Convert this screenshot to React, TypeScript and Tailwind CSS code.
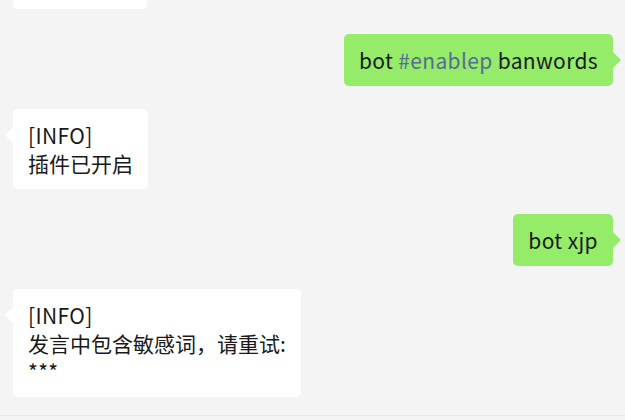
import React from "react";

const font = { fontFamily: '"Noto Sans CJK SC", "Noto Sans", sans-serif' };

function Left({ children, className = "" }: { children: React.ReactNode; className?: string }) {
  return (
    <div className={`flex justify-start pl-[13px] ${className}`}>
      <div className="relative rounded-[5px] bg-white px-[15px] py-[12px] text-[21px] leading-[28px] text-[#191919]">
        <span className="absolute left-[-8px] top-[18px] h-0 w-0 border-y-[8px] border-r-[8px] border-y-transparent border-r-white" />
        {children}
      </div>
    </div>
  );
}

function Right({ children, className = "" }: { children: React.ReactNode; className?: string }) {
  return (
    <div className={`flex justify-end pr-[12px] ${className}`}>
      <div className="relative rounded-[5px] bg-[#95ec69] px-[15px] py-[12px] text-[21px] leading-[28px] tracking-[0.35px] text-[#191919]">
        <span className="absolute right-[-8px] top-[18px] h-0 w-0 border-y-[8px] border-l-[8px] border-y-transparent border-l-[#95ec69]" />
        {children}
      </div>
    </div>
  );
}

export default function App() {
  return (
    <div className="flex h-[420px] w-[625px] flex-col overflow-hidden bg-[#f4f4f4]" style={font}>
      <div className="pl-[13px]">
        <div className="h-[9px] w-[134px] rounded-b-[5px] bg-white" />
      </div>
      <Right className="mt-[25px]">
        bot <span className="text-[#576b95]">#enablep</span> banwords
      </Right>
      <Left className="mt-[23px]">
        <div className="tracking-[0.35px]">[INFO]</div>
        <div>插件已开启</div>
      </Left>
      <Right className="mt-[25px]">bot xjp</Right>
      <Left className="mt-[23px]">
        <div className="tracking-[0.35px]">[INFO]</div>
        <div>发言中包含敏感词，请重试:</div>
        <div className="tracking-[0.35px]">***</div>
      </Left>
      <div className="mt-auto mb-[4px] h-px w-full bg-[#e6e6e6]" />
    </div>
  );
}
